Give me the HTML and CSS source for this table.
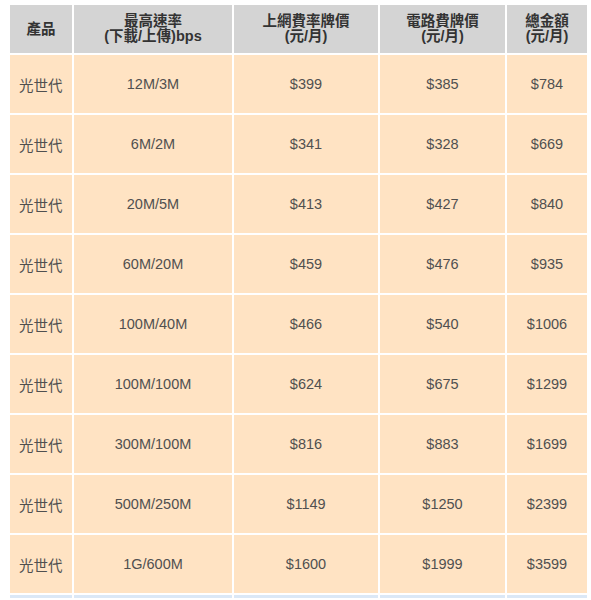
FILE: index.html
```html
<!DOCTYPE html>
<html>
<head>
<meta charset="utf-8">
<link rel="stylesheet" href="styles.css">
</head>
<body>
<div class="grid">
  <div class="h first">產品</div>
  <div class="h">最高速率<br>(下載/上傳)bps</div>
  <div class="h">上網費率牌價<br>(元/月)</div>
  <div class="h">電路費牌價<br>(元/月)</div>
  <div class="h">總金額<br>(元/月)</div>

  <div class="c first">光世代</div><div class="c">12M/3M</div><div class="c">$399</div><div class="c">$385</div><div class="c">$784</div>
  <div class="c first">光世代</div><div class="c">6M/2M</div><div class="c">$341</div><div class="c">$328</div><div class="c">$669</div>
  <div class="c first">光世代</div><div class="c">20M/5M</div><div class="c">$413</div><div class="c">$427</div><div class="c">$840</div>
  <div class="c first">光世代</div><div class="c">60M/20M</div><div class="c">$459</div><div class="c">$476</div><div class="c">$935</div>
  <div class="c first">光世代</div><div class="c">100M/40M</div><div class="c">$466</div><div class="c">$540</div><div class="c">$1006</div>
  <div class="c first">光世代</div><div class="c">100M/100M</div><div class="c">$624</div><div class="c">$675</div><div class="c">$1299</div>
  <div class="c first">光世代</div><div class="c">300M/100M</div><div class="c">$816</div><div class="c">$883</div><div class="c">$1699</div>
  <div class="c first">光世代</div><div class="c">500M/250M</div><div class="c">$1149</div><div class="c">$1250</div><div class="c">$2399</div>
  <div class="c first">光世代</div><div class="c">1G/600M</div><div class="c">$1600</div><div class="c">$1999</div><div class="c">$3599</div>

  <div class="b"></div><div class="b"></div><div class="b"></div><div class="b"></div><div class="b"></div>
</div>
</body>
</html>
```

FILE: styles.css
```css
html, body {
  margin: 0;
  padding: 0;
  background: #ffffff;
  overflow: hidden;
}
body {
  padding: 5px 0 0 10px;
  font-family: "Liberation Sans", Arial, "Noto Sans CJK TC", sans-serif;
}
.grid {
  display: grid;
  grid-template-columns: 62px 158px 144px 125px 80px;
  grid-template-rows: 48px repeat(9, 58px) 3px;
  column-gap: 2px;
  row-gap: 2px;
  width: 577px;
}
.h {
  background: #d4d4d4;
  color: #333333;
  font-weight: bold;
  font-size: 14.5px;
  line-height: 15px;
  text-align: center;
  display: flex;
  align-items: center;
  justify-content: center;
}
.c {
  background: #ffe3c3;
  color: #505050;
  font-size: 14.5px;
  display: flex;
  align-items: center;
  justify-content: center;
}
.c.first {
  justify-content: flex-start;
  padding-left: 9px;
}
.b {
  background: #dbe8f6;
}
```
